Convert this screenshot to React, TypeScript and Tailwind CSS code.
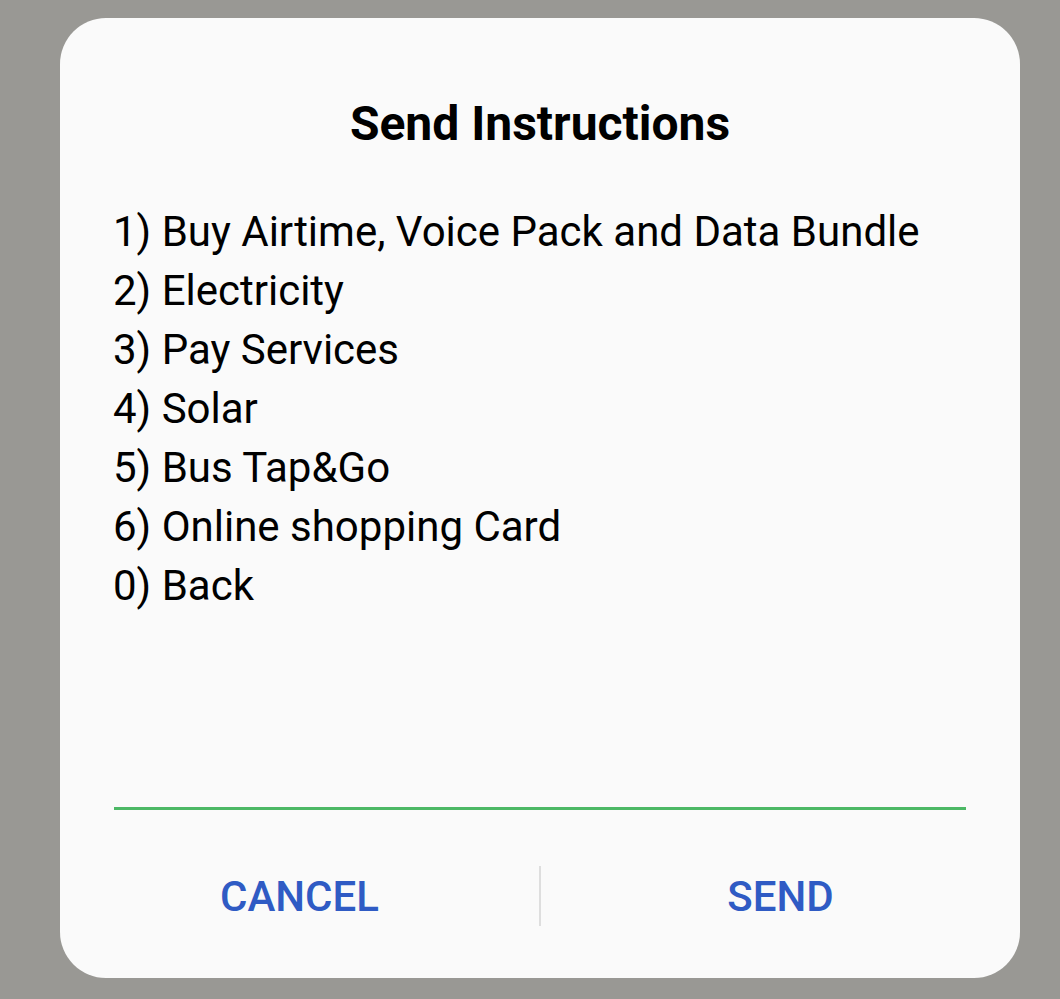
export default function App() {
  const items = [
    '1) Buy Airtime, Voice Pack and Data Bundle',
    '2) Electricity',
    '3) Pay Services',
    '4) Solar',
    '5) Bus Tap&Go',
    '6) Online shopping Card',
    '0) Back',
  ];

  return (
    <div
      className="min-h-screen w-[1060px] h-[999px] bg-[#999894] pt-[18px] pl-[60px]"
      style={{ fontFamily: 'Roboto, "Noto Sans", sans-serif' }}
    >
      <div className="w-[960px] h-[960px] rounded-[46px] bg-[#fafafa] flex flex-col">
        {/* Title */}
        <h1 className="mt-[78px] text-center text-[48px] leading-[56px] font-bold text-black">
          Send Instructions
        </h1>

        {/* Menu lines */}
        <div className="mt-[50px] pl-[53px] pr-[40px] text-[42px] leading-[59px] text-black">
          {items.map((item) => (
            <div key={item}>{item}</div>
          ))}
        </div>

        {/* Input underline */}
        <div className="mt-auto mx-[54px] h-[3px] bg-[#4cb865]" />

        {/* Buttons */}
        <div className="flex items-center h-[60px] mt-[56px] mb-[52px]">
          <button className="flex-1 text-center text-[42px] font-medium text-[#2f5bc4]">
            CANCEL
          </button>
          <div className="w-[2px] h-[60px] bg-[#dedede]" />
          <button className="flex-1 text-center text-[42px] font-medium text-[#2f5bc4]">
            SEND
          </button>
        </div>
      </div>
    </div>
  );
}
